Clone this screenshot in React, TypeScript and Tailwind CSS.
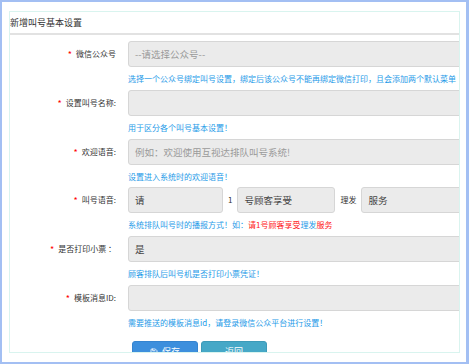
import { Save } from "lucide-react";

const FONT = { fontFamily: '"Noto Sans CJK SC", "Noto Sans", sans-serif' };

type FieldProps = {
  label: string;
  help: React.ReactNode;
  children: React.ReactNode;
  tight?: boolean;
};

function Field({ label, help, children, tight }: FieldProps) {
  return (
    <div className={tight ? "mb-[4px]" : "mb-[5px]"}>
      <div className="flex h-[26px] items-center">
        <div className="flex w-[106px] shrink-0 items-center justify-end gap-[4px] text-[8px] text-[#333]">
          <span className="text-[9px] leading-none text-[#f00]">*</span>
          <span className="whitespace-pre">{label}</span>
        </div>
        <div className="ml-[12px] flex h-full flex-1 items-center">{children}</div>
      </div>
      <p className="mt-[6px] ml-[118px] h-[12px] whitespace-nowrap text-[8px] leading-[12px] text-[#1e9ae8]">
        {help}
      </p>
    </div>
  );
}

function Box({ value, placeholder, className = "" }: { value?: string; placeholder?: string; className?: string }) {
  return (
    <div
      className={`flex h-full items-center rounded-[3px] border border-[#d6d6d6] bg-[#ebebeb] px-[6px] text-[9.5px] ${className}`}
    >
      {value ? (
        <span className="text-[#444]">{value}</span>
      ) : (
        <span className="text-[#9a9a9a]">{placeholder}</span>
      )}
    </div>
  );
}

export default function App() {
  return (
    <div
      className="h-[364px] w-[469px] overflow-hidden border-t-2 border-r-[3px] border-b-2 border-l-2 border-[#a3bff3] bg-white pt-[9px] pr-[6px] pl-[7px]"
      style={FONT}
    >
      <div className="h-[342px] overflow-hidden border border-[#d9f4ef]">
        {/* Title */}
        <div className="flex h-[23px] items-center border-b-2 border-[#e2e2e2] text-[9px] text-[#333]">
          新增叫号基本设置
        </div>

        {/* Form */}
        <div className="mr-[-12px] pt-[6px]">
          <Field label="微信公众号" help="选择一个公众号绑定叫号设置，绑定后该公众号不能再绑定微信打印，且会添加两个默认菜单">
            <Box className="flex-1" value="" placeholder="--请选择公众号--" />
          </Field>
          <Field label="设置叫号名称:" help="用于区分各个叫号基本设置！">
            <Box className="flex-1" placeholder="" />
          </Field>
          <Field label="欢迎语音:" help="设置进入系统时的欢迎语音！" tight>
            <Box className="flex-1" placeholder="例如：欢迎使用互视达排队叫号系统!" />
          </Field>
          <Field
            label="叫号语音:"
            help={
              <>
                系统排队叫号时的播报方式！如：<span className="text-[#f22]">请1号顾客享受</span>
                理发<span className="text-[#f22]">服务</span>
              </>
            }
          >
            <Box className="w-[95px] shrink-0" value="请" />
            <span className="mx-[5px] text-[8px] text-[#333]">1</span>
            <Box className="w-[98px] shrink-0" value="号顾客享受" />
            <span className="mx-[5px] text-[8px] text-[#333]">理发</span>
            <Box className="flex-1" value="服务" />
          </Field>
          <Field label="是否打印小票 ：" help="顾客排队后叫号机是否打印小票凭证！">
            <Box className="flex-1" value="是" />
          </Field>
          <Field label="模板消息ID:" help="需要推送的模板消息id，请登录微信公众平台进行设置！">
            <Box className="flex-1" placeholder="" />
          </Field>

          {/* Buttons */}
          <div className="mt-[12px] ml-[122px] flex gap-[3px]">
            <button className="flex h-[22px] w-[66px] items-center justify-center gap-[4px] rounded-[3px] border border-[#3584cf] bg-[#3d8fdd] text-[9px] text-white">
              <Save className="h-[8px] w-[8px]" strokeWidth={2.5} />
              保存
            </button>
            <button className="flex h-[22px] w-[66px] items-center justify-center rounded-[3px] border border-[#3d9ab8] bg-[#46a8c7] text-[9px] text-white">
              返回
            </button>
          </div>
        </div>
      </div>
    </div>
  );
}
